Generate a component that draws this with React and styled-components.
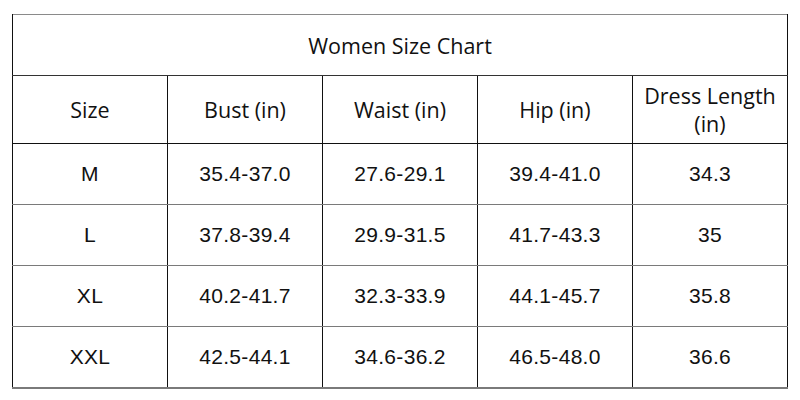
import React from 'react'
import styled, { createGlobalStyle } from 'styled-components'

const GlobalStyle = createGlobalStyle`
  body {
    margin: 0;
    background: #ffffff;
  }
`

const rows = [
  ['M', '35.4-37.0', '27.6-29.1', '39.4-41.0', '34.3'],
  ['L', '37.8-39.4', '29.9-31.5', '41.7-43.3', '35'],
  ['XL', '40.2-41.7', '32.3-33.9', '44.1-45.7', '35.8'],
  ['XXL', '42.5-44.1', '34.6-36.2', '46.5-48.0', '36.6'],
]

const headers = ['Size', 'Bust (in)', 'Waist (in)', 'Hip (in)', 'Dress Length (in)']

const App = () => {
  return (
    <Page>
      <GlobalStyle />
      <Chart>
        <tbody>
          <tr>
            <Title colSpan={5}>Women Size Chart</Title>
          </tr>
          <tr>
            {headers.map((h) => (
              <Head key={h}>{h}</Head>
            ))}
          </tr>
          {rows.map((r) => (
            <tr key={r[0]}>
              {r.map((v, i) => (
                <Cell key={i}>{v}</Cell>
              ))}
            </tr>
          ))}
        </tbody>
      </Chart>
    </Page>
  )
}

export default App

const Page = styled.div`
  padding: 14px 12px;
  width: 800px;
  height: 400px;
  box-sizing: border-box;
`

const Chart = styled.table`
  border-collapse: collapse;
  width: 776px;
  table-layout: fixed;
  border-top: 1px solid #8a8a8a;
  border-left: 1px solid #7a7a7a;
  border-right: 1px solid #222;
  border-bottom: 2px solid #7a7a7a;
  color: #111;

  td {
    padding: 0;
    text-align: center;
    vertical-align: middle;
    border-left: 1px solid #111;
    border-right: 1px solid #111;
    border-bottom: 1px solid #7a7a7a;
  }
`

const Title = styled.td`
  height: 60px;
  font-family: 'Open Sans', sans-serif;
  font-size: 21.5px;
  border-bottom: 1px solid #333 !important;
`

const Head = styled.td`
  height: 67px;
  padding: 0 4px !important;
  font-family: 'Open Sans', sans-serif;
  font-size: 21.5px;
  line-height: 28px;
  border-bottom: 1px solid #111 !important;
`

const Cell = styled.td`
  height: 60px;
  font-family: 'Liberation Sans', Arial, sans-serif;
  font-size: 21px;
  letter-spacing: 0.3px;
`
